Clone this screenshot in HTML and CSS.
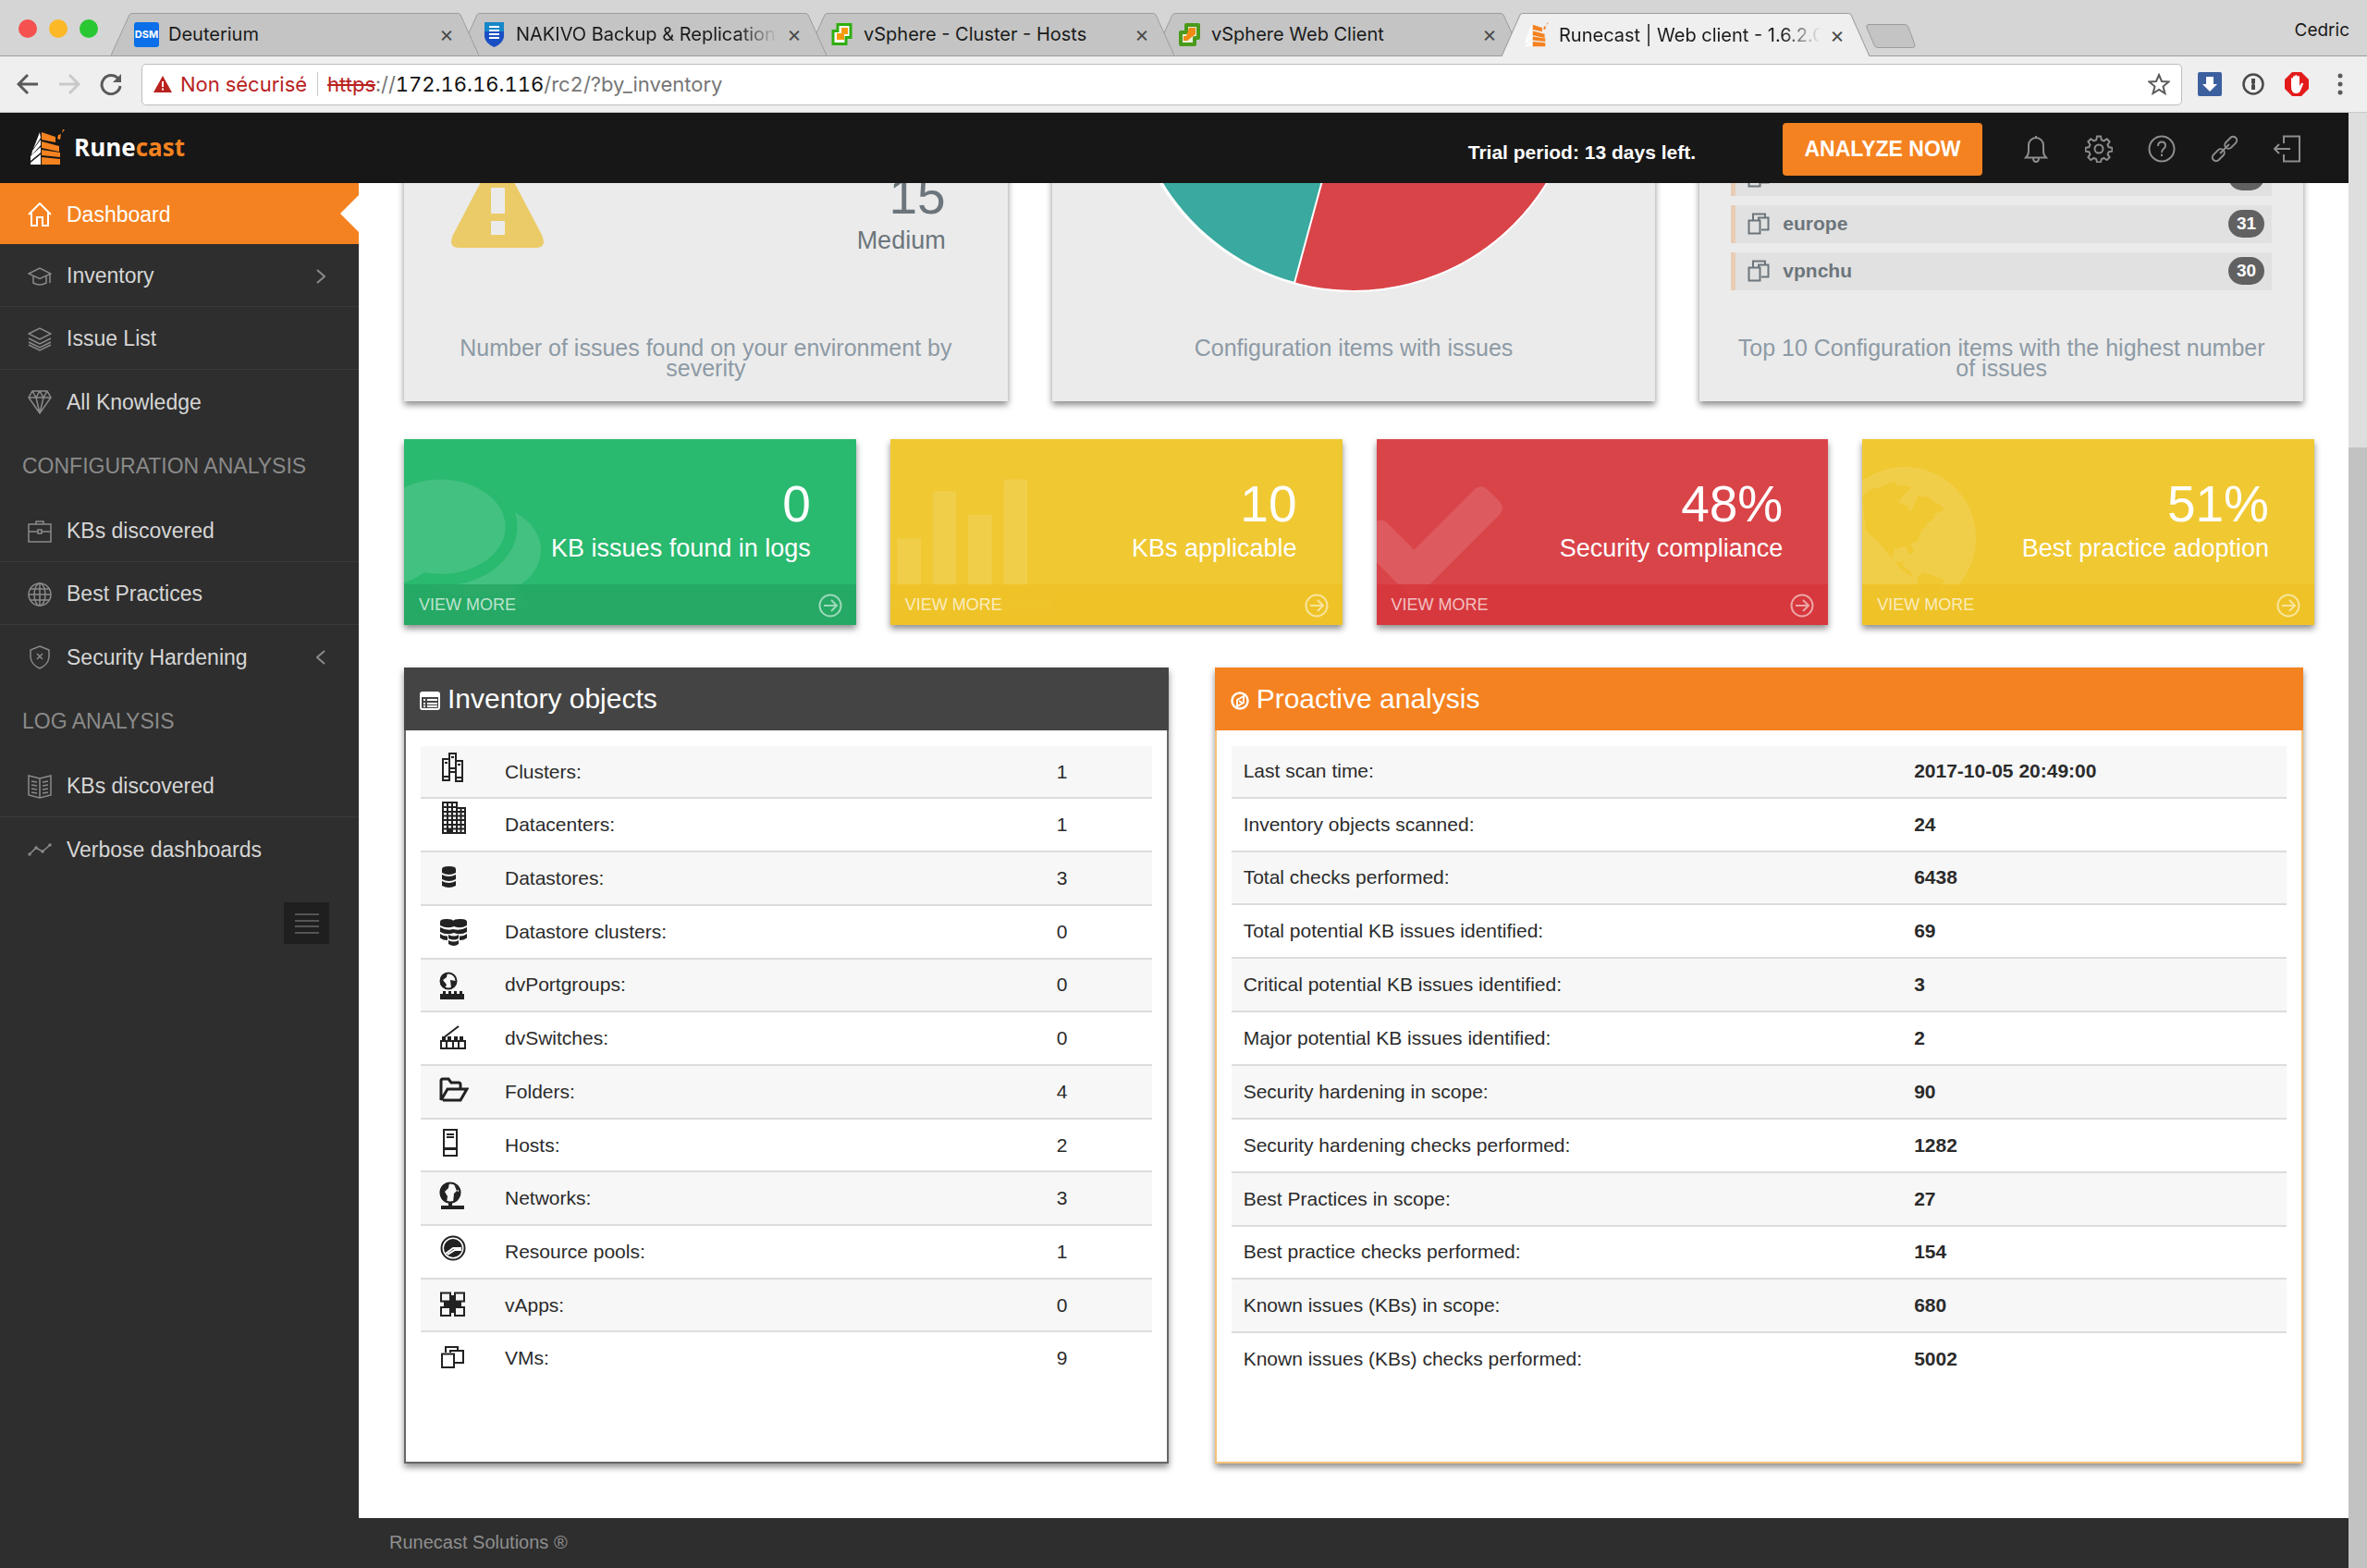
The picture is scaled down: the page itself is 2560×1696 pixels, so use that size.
FILE: index.html
```html
<!DOCTYPE html>
<html lang="en">
<head>
  <meta charset="UTF-8">
  <title>Runecast | Web client - 1.6.2.0</title>
  <link rel="stylesheet" href="styles.css">
</head>
<body>

  <!-- shared shapes -->
  <svg class="defs" aria-hidden="true">
    <symbol id="tab-shape" viewBox="0 0 398 46" preserveAspectRatio="none">
      <path d="M0 46 L20 2 Q21 .5 23 .5 H375 Q377 .5 378 2 L398 46"/>
    </symbol>
    <symbol id="vm" viewBox="0 0 24 24">
      <path d="M6 8V1.500h13V5M12 8V5.500h10.500v13H15M1.500 8.500h12v14h-12z"/>
    </symbol>
    <symbol id="arrow" viewBox="0 0 26 26">
      <circle cx="13" cy="13" r="11.500"/><path d="M6 13h13M14 7l6 6-6 6"/>
    </symbol>
    <symbol id="logo" viewBox="0 0 40 40">
      <path class="logo-side" d="M11 4L12 10 4 22zM12 12v6L2 29l1-5zM12 20v6L1 35v-5zM12 28v11H1v-2z"/>
      <path class="logo-front" d="M13 4l15 5v6l-15-3zM13 14l19 5v6l-19-4zM13 23l20 3v5l-20-2zM13 31l20 2v6H13zM31 7l3-1-1 6-3-1zM36 1l2 0-3 4z"/>
    </symbol>
  </svg>

  <!-- browser window -->
  <div class="tabstrip">
    <div class="lights"><span class="red"></span><span class="amber"></span><span class="green"></span></div>
    <div class="tabs">
      <div class="tab">
        <svg class="tab-bg"><use href="#tab-shape"/></svg>
        <span class="dsm">DSM</span>
        <span class="tab-title">Deuterium</span>
        <button class="close" aria-label="Close tab">×</button>
      </div>
      <div class="tab">
        <svg class="tab-bg"><use href="#tab-shape"/></svg>
        <svg class="favicon" viewBox="0 0 27 27"><path fill="#1687c9" d="M3 0h21v12H3z"/><path fill="#1a4fc4" d="M3 10h21v6q-1 7-10.500 11Q4 23 3 16z"/><path stroke="#fff" stroke-width="2" d="M8 5h11M8 9h11M8 13h11M8 17h11"/></svg>
        <span class="tab-title faded">NAKIVO Backup &amp; Replication v</span>
        <button class="close" aria-label="Close tab">×</button>
      </div>
      <div class="tab">
        <svg class="tab-bg"><use href="#tab-shape"/></svg>
        <svg class="favicon" viewBox="0 0 27 27"><path fill="#fff" stroke="#2fae10" stroke-width="3" d="M9 2.500h14v14h-5v7H4v-14h5z"/><path fill="#f59a0c" d="M13 6h7v7h-4v6H8v-7h5z"/></svg>
        <span class="tab-title">vSphere - Cluster - Hosts</span>
        <button class="close" aria-label="Close tab">×</button>
      </div>
      <div class="tab">
        <svg class="tab-bg"><use href="#tab-shape"/></svg>
        <svg class="favicon" viewBox="0 0 27 27"><path fill="#e9efd8" stroke="#4a9a1c" stroke-width="4" stroke-linejoin="round" d="M10 3h13v14h-4v7H4V11h6z"/><path fill="#ef8a12" d="M13 6h7v7l-9 7H7v-5h3z"/></svg>
        <span class="tab-title">vSphere Web Client</span>
        <button class="close" aria-label="Close tab">×</button>
      </div>
      <div class="tab active">
        <svg class="tab-bg"><use href="#tab-shape"/></svg>
        <svg class="favicon dark-side"><use href="#logo"/></svg>
        <span class="tab-title faded">Runecast | Web client - 1.6.2.0</span>
        <button class="close" aria-label="Close tab">×</button>
      </div>
      <svg class="newtab" viewBox="0 0 54 26"><path d="M3 .5h39q3 0 4 3l7 19q0 3-2 3H13q-3 0-4-3L1 4Q0 .5 3 .5z"/></svg>
    </div>
    <span class="profile">Cedric</span>
  </div>

  <div class="toolbar">
    <button class="tool" aria-label="Back"><svg viewBox="0 0 24 24"><path d="M23 12H2M12 2L2 12l10 10"/></svg></button>
    <button class="tool off" aria-label="Forward"><svg viewBox="0 0 24 24"><path d="M1 12h21M12 2l10 10-10 10"/></svg></button>
    <button class="tool" aria-label="Reload"><svg viewBox="0 0 24 24"><path d="M20 6.500A10 10 0 1 0 22 14"/><path fill="#5a5a5a" stroke="none" d="M23 1v9h-9z"/></svg></button>
    <div class="omnibox">
      <svg class="warn" viewBox="0 0 20 18"><path fill="#b9221f" d="M10 0l10 18H0z"/><path stroke="#fff" stroke-width="2" d="M10 6v6M10 13.500v2"/></svg>
      <span class="insecure">Non sécurisé</span>
      <label class="url" for="address"><s>https</s>://<b>172.16.16.116</b></label>
      <input id="address" type="text" value="/rc2/?by_inventory">
      <svg class="star" viewBox="0 0 24 24"><path d="M12 2l3 7 7.500.5-6 5 2 7.500-6.500-4-6.500 4 2-7.500-6-5L9 9z"/></svg>
    </div>
    <div class="extensions">
      <svg viewBox="0 0 26 26"><rect width="26" height="26" rx="2" fill="#3c5f9e"/><path fill="#fff" d="M9 5h8v8h4l-8 8-8-8h4z"/></svg>
      <svg viewBox="0 0 26 26"><circle cx="13" cy="13" r="10.500" fill="none" stroke="#4a4a4a" stroke-width="2.500"/><path fill="#4a4a4a" d="M11 7h4v5l-1 1 1 1v5h-4v-5l1-1-1-1z"/></svg>
      <svg viewBox="0 0 26 26"><path fill="#e31b1b" d="M8 0h10l8 8v10l-8 8H8l-8-8V8z"/><path fill="#fff" d="M7 15V7q1-2 2 0v5V5q1-2 2 0v6V4q1.500-2 2.500 0v7V5q1.500-2 2.500 0v10l2-3q2-1 2 1l-3 7q-1 3-5 3-5 0-5-8z"/></svg>
      <svg class="dots" viewBox="0 0 26 26"><circle cx="13" cy="4" r="2.500"/><circle cx="13" cy="13" r="2.500"/><circle cx="13" cy="22" r="2.500"/></svg>
    </div>
  </div>

  <div class="viewport">
    <div class="page">

      <header class="header">
        <a class="brand" href="#"><svg><use href="#logo"/></svg><span>Rune<em>cast</em></span></a>
        <div class="header-right">
          <strong class="trial">Trial period: 13 days left.</strong>
          <button class="analyze">ANALYZE NOW</button>
          <nav class="header-icons">
            <a href="#" aria-label="Notifications"><svg viewBox="0 0 30 30"><path d="M4 24.500q3-3 3-7V11a8 8 0 0 1 16 0v6.500q0 4 3 7zM12 25q0 4 3 4t3-4M15 3V1"/></svg></a>
            <a href="#" aria-label="Settings"><svg viewBox="0 0 30 30"><circle cx="15" cy="15" r="4.500"/><path d="M13 1.500h4l.8 3.800 2.600 1.100 3.300-2.100 2.900 2.900-2.100 3.300 1.100 2.600 3.900.8v3.600l-3.900.8-1.100 2.600 2.100 3.300-2.900 2.900-3.300-2.100-2.600 1.100-.8 3.400h-4l-.8-3.400-2.600-1.100-3.300 2.100-2.900-2.900 2.100-3.300-1.100-2.600-3.900-.8v-3.600l3.900-.8 1.100-2.600-2.100-3.300 2.900-2.900 3.300 2.100 2.600-1.100z"/></svg></a>
            <a href="#" aria-label="Help"><svg viewBox="0 0 30 30"><circle cx="15" cy="15" r="13.500"/><path d="M11 12q0-4.500 4-4.500t4 4q0 2-2 3.500t-2 4M15 20.500v2.500"/></svg></a>
            <a href="#" aria-label="Link"><svg viewBox="0 0 30 30"><g transform="rotate(45 15 15)"><rect x="11" y="-2" width="8" height="15" rx="4"/><rect x="11" y="17" width="8" height="15" rx="4"/><path d="M15 8v14"/></g></svg></a>
            <a href="#" aria-label="Log out"><svg viewBox="0 0 30 30"><path d="M11 9V1.500h17v27H11V21M1 15h17M6 10l-5 5 5 5"/></svg></a>
          </nav>
        </div>
      </header>

      <div class="columns">
        <aside class="sidebar">
          <nav class="menu">
            <a class="active" href="#"><svg viewBox="0 0 26 26"><path d="M1 13L13 1l12 12M4 11v14h6v-9h6v9h6V11"/></svg>Dashboard</a>
            <a href="#"><svg viewBox="0 0 26 26"><path d="M1 10l12-6 12 6-12 5.500zM6 13v7q7 4 14 0v-7M24 11v9"/></svg>Inventory<svg class="chevron" viewBox="0 0 10 16"><path d="M1 1l8 7-8 7"/></svg></a>
            <a href="#"><svg viewBox="0 0 26 26"><path d="M1 7l12-6 12 6-12 6zM1 12l12 6 12-6M1 16l12 6 12-6M1 19l12 6 12-6"/></svg>Issue List</a>
            <a href="#"><svg viewBox="0 0 26 26"><path d="M5 1h16l4 7-12 17L1 8zM1 8h24M9 8l4 17 4-17M5 1l4 7 4-7 4 7 4-7"/></svg>All Knowledge</a>
          </nav>
          <h3 class="menu-title">CONFIGURATION ANALYSIS</h3>
          <nav class="menu">
            <a href="#"><svg viewBox="0 0 26 26"><path d="M1 5h24v19H1zM9 5V2h8v3M1 13h10M15 13h10M11 11h4v4h-4z"/></svg>KBs discovered</a>
            <a href="#"><svg viewBox="0 0 26 26"><circle cx="13" cy="13" r="12"/><ellipse cx="13" cy="13" rx="6" ry="12"/><path d="M13 1v24M1 13h24M3 7h20M3 19h20"/></svg>Best Practices</a>
            <a href="#"><svg viewBox="0 0 26 26"><path d="M13 1l10 4v8q-1 8-10 12Q4 21 3 13V5zM10 9l6 6M16 9l-6 6"/></svg>Security Hardening<svg class="chevron" viewBox="0 0 10 16"><path d="M9 1L1 8l8 7"/></svg></a>
          </nav>
          <h3 class="menu-title">LOG ANALYSIS</h3>
          <nav class="menu">
            <a href="#"><svg viewBox="0 0 26 26"><path d="M1 1l12 3 12-3v21l-12 3-12-3zM13 4v21M4 7l6 1M4 11l6 1M4 15l6 1M4 19l6 1M22 7l-6 1M22 11l-6 1M22 15l-6 1M22 19l-6 1"/></svg>KBs discovered</a>
            <a href="#"><svg viewBox="0 0 26 26"><path d="M2 18l7-7 7 4 8-7" /><g fill="#8a8a8a"><circle cx="2" cy="18" r="1"/><circle cx="9" cy="11" r="1"/><circle cx="16" cy="15" r="1"/><circle cx="24" cy="8" r="1"/></g></svg>Verbose dashboards</a>
          </nav>
          <button class="collapse" aria-label="Collapse menu"><svg viewBox="0 0 28 24"><path d="M1 2h26M1 9h26M1 15h26M1 22h26"/></svg></button>
        </aside>

        <div class="content">
          <main>

            <div class="cards">
              <section class="card">
                <div class="severity">
                  <svg viewBox="0 0 100 96"><path fill="#ebcb67" fill-rule="evenodd" d="M43 4q7-8 14 0l41 78q6 14-6 14H8q-12 0-6-14zM43 31v28h15V31zM43 67v15h15V67z"/></svg>
                  <div><div class="number">15</div><div class="label">Medium</div></div>
                </div>
                <p class="caption">Number of issues found on your environment by severity</p>
              </section>

              <section class="card">
                <svg class="pie" viewBox="0 0 492 492">
                  <circle cx="246" cy="246" r="245" fill="#d94449" stroke="#fff" stroke-width="2"/>
                  <path fill="#3aa99f" stroke="#fff" stroke-width="2" d="M246 246L182 482A245 245 0 0 1 246 1z"/>
                </svg>
                <p class="caption">Configuration items with issues</p>
              </section>

              <section class="card">
                <ul class="top-list">
                  <li><svg><use href="#vm"/></svg>debian1<span class="badge">31</span></li>
                  <li><svg><use href="#vm"/></svg>europe<span class="badge">31</span></li>
                  <li><svg><use href="#vm"/></svg>vpnchu<span class="badge">30</span></li>
                </ul>
                <p class="caption">Top 10 Configuration items with the highest number of issues</p>
              </section>
            </div>

            <div class="tiles">
              <section class="tile green">
                <svg class="mark" viewBox="0 0 1792 1792"><path d="M1408 768q0 139-94 257t-256.500 186.500-353.500 68.500q-86 0-176-16-124 88-278 128-36 9-86 16h-3q-11 0-20.500-8t-11.500-21q-1-3-1-6.500t.5-6.500 2-6l2.500-5t3.500-5.500 4-5 4.500-5 4-4.500q5-6 23-25t26-29.500 22.500-29 25-38.500 20.500-44q-124-72-195-177t-71-224q0-139 94-257t256.500-186.500 353.500-68.500 353.500 68.500 256.500 186.500 94 257zm384 256q0 120-71 224.500t-195 176.500q10 24 20.500 44t25 38.500 22.500 29 26 29.500 23 25q1 1 4 4.500t4.500 5 4 5 3.500 5.500l2.500 5t2 6 .5 6.500-1 6.500q-3 14-13 22t-22 7q-50-7-86-16-154-40-278-128-90 16-176 16-271 0-472-132 58 4 88 4 161 0 309-45t264-129q125-92 192-212t67-257q0-77-23-152 129 71 204 178t75 230z"/></svg>
                <div class="figures"><div class="number">0</div><div class="label">KB issues found in logs</div></div>
                <a class="more" href="#">VIEW MORE<svg><use href="#arrow"/></svg></a>
              </section>
              <section class="tile yellow">
                <svg class="mark" viewBox="0 0 1792 1792"><path d="M640 896v512h-256v-512h256zm384-512v1024h-256v-1024h256zm1024 1152v128h-2048v-1536h128v1408h1920zm-640-896v768h-256v-768h256zm384-384v1152h-256v-1152h256z"/></svg>
                <div class="figures"><div class="number">10</div><div class="label">KBs applicable</div></div>
                <a class="more" href="#">VIEW MORE<svg><use href="#arrow"/></svg></a>
              </section>
              <section class="tile red">
                <svg class="mark" viewBox="0 0 1792 1792"><path d="M1671 566q0 40-28 68l-724 724-136 136q-28 28-68 28t-68-28l-136-136-362-362q-28-28-28-68t28-68l136-136q28-28 68-28t68 28l294 295 656-657q28-28 68-28t68 28l136 136q28 28 28 68z"/></svg>
                <div class="figures"><div class="number">48%</div><div class="label">Security compliance</div></div>
                <a class="more" href="#">VIEW MORE<svg><use href="#arrow"/></svg></a>
              </section>
              <section class="tile yellow">
                <svg class="mark globe" viewBox="0 0 179 179"><path fill-rule="evenodd" d="M89 12a77 77 0 1 0 .1 0zM43 44l7-7 12-3 16-6 3 5 4-2 12 3-6 5-9 11 11 5 2 6 4-7 5-11 11 2 5 5 6 2 6 6-12 6 2 3-7 5-10 12-1 8-9 3 4 9-4 3-6-9-12 3-2 12 10 3 3-5-1 9 8 5 3 7-12-8-12-15-15-17-12-11zM103 130l7-4 22 8-5 11-17 7-7-8z"/></svg>
                <div class="figures"><div class="number">51%</div><div class="label">Best practice adoption</div></div>
                <a class="more" href="#">VIEW MORE<svg><use href="#arrow"/></svg></a>
              </section>
            </div>

            <div class="panels">
              <section class="panel inventory">
                <h2><svg viewBox="0 0 22 20"><rect x="1" y="1" width="20" height="18" rx="2" fill="none" stroke="#fff" stroke-width="2"/><path fill="#fff" d="M1 1h20v5H1zM4 8h2v2H4zM4 12h2v2H4zM4 15h2v2H4zM8 8h11v2H8zM8 12h11v2H8zM8 15h11v2H8z"/></svg>Inventory objects</h2>
                <table>
                  <tr><td class="ico"><svg viewBox="0 0 32 44"><path d="M4 14h7v23H4zM11 8h7v20h-7zM18 16h7v22h-7zM4 33h7M18 34h7M11 24h7"/><path d="M6 18h3M13 12h3M20 20h3"/></svg></td><td>Clusters:</td><td>1</td></tr>
                  <tr><td class="ico"><svg viewBox="0 0 32 44"><path d="M4 4h15v33H4zM19 10h9v27h-9M9 4v33M14 4v33M23.500 10v27M4 9h15M4 14h24M4 18.500h24M4 23h24M4 28h24M4 32.500h24"/><path class="solid" d="M9 32h6v5H9z"/></svg></td><td>Datacenters:</td><td>1</td></tr>
                  <tr><td class="ico"><svg viewBox="0 0 32 44"><path class="solid" d="M3 18q0-3 7.500-3t7.500 3v4q-7.500 4-15 0zM3 24q7.500 4 15 0v5q-7.500 4-15 0zM3 31q7.500 4 15 0v5q-7.500 4-15 0z"/></svg></td><td>Datastores:</td><td>3</td></tr>
                  <tr><td class="ico"><svg viewBox="0 0 32 44"><path class="solid" d="M1 17q0-3 7-3t7 2q1-2 8-2t7 3v4q-7 4-14 1-7 3-15-1zM1 23q7 4 14 2 8 2 15-2v5q-7 4-14 1-8 3-15-1zM1 30q4 3 8 2.500V37q-5 0-8-2.500zM30 30q-4 3-8 2.500V37q5 0 8-2.500zM10 31q6 3 11 0v4q-5 3-11 0zM10 37q6 3 11 0v4q-5 4-11 0z"/></svg></td><td>Datastore clusters:</td><td>0</td></tr>
                  <tr><td class="ico"><svg viewBox="0 0 32 44"><circle cx="10" cy="23" r="8.500"/><path class="solid" d="M9 14q-8 1-8 9 0 6 5 8l2-4-4-5 4-3zM12 22l6 1q0 5-5 8zM1 37h3v-3h3v3h3v-3h3v3h3v-3h3v3h3v-3h3v3h2v6H1z"/></svg></td><td>dvPortgroups:</td><td>0</td></tr>
                  <tr><td class="ico"><svg viewBox="0 0 32 44"><path d="M2 31h26v8H2zM8 31v8M15 31v8M21 31v8M5 27v3M11 27v3M18 27v3M24 27v3M4 28l17-13"/><path class="solid" d="M3 26h4v4H3zM9 26h4v4H9zM16 26h4v4h-4zM22 26h4v4h-4z"/></svg></td><td>dvSwitches:</td><td>0</td></tr>
                  <tr><td class="ico"><svg class="bold" viewBox="0 0 32 44"><path d="M2 37V16q0-2 2-2h6l3 4h8q2 0 2 2v4M2 37l7-12h21l-7 12H4"/></svg></td><td>Folders:</td><td>4</td></tr>
                  <tr><td class="ico"><svg viewBox="0 0 32 44"><path d="M5 11h14v28H5zM8 16h8M8 19h8"/><path class="solid" d="M5 30h14v3H5z"/></svg></td><td>Hosts:</td><td>2</td></tr>
                  <tr><td class="ico"><svg viewBox="0 0 32 44"><circle cx="12" cy="22" r="10.500"/><path class="solid" d="M11 11Q1 12 1 22q0 8 7 11l1-7-3-5 4-4zM16 13l6 5-3 2zM16 23l3-3 4 2q-1 8-8 11zM10 32h4v4h13v4H2v-4h8z"/></svg></td><td>Networks:</td><td>3</td></tr>
                  <tr><td class="ico"><svg viewBox="0 0 32 44"><circle cx="15" cy="24" r="12.500"/><circle class="solid" cx="15" cy="24" r="10"/><path class="light" d="M7 30l8-6h9M9 31l8-5h7"/></svg></td><td>Resource pools:</td><td>1</td></tr>
                  <tr><td class="ico"><svg viewBox="0 0 32 44"><path d="M2 14.500h10v9H2zM17 14.500h10v9H17zM2 30h10v9H2zM17 30h10v9H17z"/><path class="solid" d="M12 17h5v6h7v7h-7v6h-5v-6H5v-7h7z"/></svg></td><td>vApps:</td><td>0</td></tr>
                  <tr><td class="ico"><svg viewBox="0 0 32 44"><path d="M7 22v-6h13v4M12 22v-2h14v13h-9M3 23.500h13V38H3z"/></svg></td><td>VMs:</td><td>9</td></tr>
                </table>
              </section>

              <section class="panel proactive">
                <h2><svg viewBox="0 0 20 20"><circle cx="10" cy="10" r="8.500" fill="none" stroke="#fff" stroke-width="2.500"/><path fill="none" stroke="#fff" stroke-width="2" d="M14 5l-7 4v7l7-4zM9 10l3 2"/></svg>Proactive analysis</h2>
                <table>
                  <tr><td>Last scan time:</td><th>2017-10-05 20:49:00</th></tr>
                  <tr><td>Inventory objects scanned:</td><th>24</th></tr>
                  <tr><td>Total checks performed:</td><th>6438</th></tr>
                  <tr><td>Total potential KB issues identified:</td><th>69</th></tr>
                  <tr><td>Critical potential KB issues identified:</td><th>3</th></tr>
                  <tr><td>Major potential KB issues identified:</td><th>2</th></tr>
                  <tr><td>Security hardening in scope:</td><th>90</th></tr>
                  <tr><td>Security hardening checks performed:</td><th>1282</th></tr>
                  <tr><td>Best Practices in scope:</td><th>27</th></tr>
                  <tr><td>Best practice checks performed:</td><th>154</th></tr>
                  <tr><td>Known issues (KBs) in scope:</td><th>680</th></tr>
                  <tr><td>Known issues (KBs) checks performed:</td><th>5002</th></tr>
                </table>
              </section>
            </div>

          </main>
          <footer>Runecast Solutions ®</footer>
        </div>
      </div>
    </div>
    <div class="scrollbar"><div class="thumb"></div></div>
  </div>

</body>
</html>
```
FILE: styles.css
```css
* {
  box-sizing: border-box;
}

body {
  margin: 0;
  height: 100vh;
  display: flex;
  flex-direction: column;
  overflow: hidden;
  background: #fff;
  color: #2b2b2b;
  font-family: "Liberation Sans", Arial, sans-serif;
  font-size: 21px;
}

a {
  color: inherit;
  text-decoration: none;
}

button {
  border: none;
  padding: 0;
  background: none;
  font-family: inherit;
}

svg {
  display: block;
  flex: none;
}

.defs {
  position: absolute;
  width: 0;
  height: 0;
}

/* browser tabs */
.tabstrip {
  height: 61px;
  flex: none;
  display: flex;
  align-items: flex-end;
  background: #d5d5d5;
  border-bottom: 1px solid #9c9c9c;
  font-family: Inter, Roboto, sans-serif;
  color: #1a1a1a;
}

.lights {
  display: flex;
  gap: 13px;
  padding-left: 20px;
  width: 120px;
  height: 39px;
}

.lights span {
  width: 20px;
  height: 20px;
  border-radius: 50%;
}

.lights .red { background: #f5514f; }
.lights .amber { background: #fcb827; }
.lights .green { background: #29c833; }

.tabs {
  flex: 1;
  display: flex;
}

.tab {
  position: relative;
  width: 398px;
  height: 46px;
  margin-right: -22px;
  padding: 0 29px 0 25px;
  display: flex;
  align-items: center;
  gap: 10px;
}

.tab:nth-child(1) { z-index: 4; }
.tab:nth-child(2) { z-index: 3; }
.tab:nth-child(3) { z-index: 2; }
.tab:nth-child(4) { z-index: 1; }

.tab.active {
  z-index: 5;
  margin-bottom: -1px;
  height: 47px;
}

.tab-bg {
  position: absolute;
  left: 0;
  top: 0;
  width: 100%;
  height: 100%;
  z-index: -1;
  fill: #c4c4c4;
  stroke: #9c9c9c;
}

.active .tab-bg {
  fill: #efefef;
}

.favicon {
  width: 27px;
  height: 27px;
}

.dsm {
  width: 27px;
  height: 27px;
  border-radius: 3px;
  background: #0a6fe8;
  color: #fff;
  font-size: 11px;
  font-weight: bold;
  line-height: 27px;
  text-align: center;
}

.tab-title {
  flex: 1;
  overflow: hidden;
  white-space: nowrap;
  font-size: 20px;
}

.faded {
  mask-image: linear-gradient(to right, #000 85%, transparent);
}

.close {
  width: 14px;
  color: #4a4a4a;
  font-size: 24px;
  line-height: 24px;
}

.newtab {
  width: 54px;
  height: 26px;
  margin: 12px 0 0 18px;
  fill: #c4c4c4;
  stroke: #9c9c9c;
}

.profile {
  padding-right: 19px;
  height: 39px;
  font-size: 19px;
}

/* browser toolbar */
.toolbar {
  height: 61px;
  flex: none;
  display: flex;
  align-items: center;
  background: #efefef;
  border-bottom: 1px solid #c9c9c9;
  font-family: Inter, Roboto, sans-serif;
  font-variant-numeric: tabular-nums;
  padding: 0 16px 0 18px;
}

.tool {
  width: 24px;
  margin-right: 21px;
}

.tool svg {
  width: 24px;
  height: 24px;
  fill: none;
  stroke: #5a5a5a;
  stroke-width: 3;
}

.tool.off svg {
  stroke: #c9c9c9;
}

.omnibox {
  flex: 1;
  height: 45px;
  display: flex;
  align-items: center;
  padding: 0 12px;
  background: #fff;
  border: 1px solid #bdbdbd;
  border-radius: 5px;
  font-size: 22px;
}

.warn {
  width: 20px;
  height: 18px;
  margin-right: 9px;
}

.insecure {
  color: #b9221f;
  padding-right: 11px;
  border-right: 1px solid #c9c9c9;
  margin-right: 10px;
  line-height: 26px;
}

.url {
  color: #767676;
}

.url s {
  color: #b9221f;
}

.url b {
  color: #111;
  font-weight: normal;
}

.omnibox input {
  flex: 1;
  border: none;
  padding: 0;
  outline: none;
  color: #767676;
  font: inherit;
}

.star {
  width: 24px;
  height: 24px;
  fill: none;
  stroke: #5a5a5a;
  stroke-width: 2;
}

.extensions {
  display: flex;
  gap: 21px;
  padding-left: 17px;
}

.extensions svg {
  width: 26px;
  height: 26px;
}

.extensions .dots {
  fill: #5a5a5a;
}

/* page frame */
.viewport {
  flex: 1;
  min-height: 0;
  display: flex;
}

.page {
  flex: 1;
  display: flex;
  flex-direction: column;
}

.scrollbar {
  width: 20px;
  display: flex;
  flex-direction: column;
  justify-content: flex-end;
  background: #dedede;
}

.thumb {
  height: 77%;
  background: #c2c2c2;
}

.header {
  height: 76px;
  flex: none;
  display: flex;
  justify-content: space-between;
  align-items: center;
  padding: 2px 51px 0 32px;
  background: #171717;
  color: #fff;
}

.brand {
  display: flex;
  align-items: center;
  gap: 8px;
  padding-bottom: 4px;
  font-family: "Open Sans", sans-serif;
  font-size: 26px;
  font-weight: 700;
}

.brand svg {
  width: 40px;
  height: 40px;
}

.brand em {
  font-style: normal;
  color: #f58220;
}

.logo-side { fill: #fff; }
.dark-side .logo-side { fill: #777; }
.logo-front { fill: #f58220; }

.header-right {
  display: flex;
  align-items: center;
}

.trial {
  padding: 8px 94px 0 0;
}

.analyze {
  width: 216px;
  height: 57px;
  margin-right: 43px;
  border-radius: 4px;
  background: #f58220;
  color: #fff;
  font-size: 23px;
  font-weight: bold;
}

.header-icons {
  display: flex;
  gap: 38px;
}

.header-icons svg {
  width: 30px;
  height: 30px;
  fill: none;
  stroke: #8d8d8d;
  stroke-width: 2;
}

.columns {
  flex: 1;
  min-height: 0;
  display: flex;
}

/* left menu */
.sidebar {
  width: 388px;
  flex: none;
  background: #2e2e2e;
  color: #d6d6d6;
}

.menu a {
  position: relative;
  height: 68px;
  display: flex;
  align-items: center;
  gap: 16px;
  padding: 2px 36px 0 30px;
  border-bottom: 1px solid #3a3a3a;
  font-size: 23px;
}

.menu a:last-child {
  border-bottom: none;
}

.menu a.active {
  height: 66px;
  border-bottom: none;
  background: #f58220;
  color: #fff;
}

/* notch that points at the open page */
.menu a.active::after {
  content: "";
  position: absolute;
  right: 0;
  top: 13px;
  border: 20px solid transparent;
  border-left: none;
  border-right-color: #fff;
}

.menu svg {
  width: 26px;
  height: 26px;
  fill: none;
  stroke: #8a8a8a;
  stroke-width: 1.5;
}

.menu .active svg {
  stroke: #fff;
  stroke-width: 2;
}

.menu .chevron {
  width: 10px;
  height: 16px;
  margin-left: auto;
  stroke-width: 2;
}

.menu-title {
  margin: 0;
  padding-left: 24px;
  color: #8a8a8a;
  font-size: 23px;
  font-weight: normal;
  line-height: 72px;
}

.collapse {
  display: block;
  width: 49px;
  height: 45px;
  margin: 24px 32px 0 auto;
  padding: 0 11px;
  background: #1f1f1f;
}

.collapse svg {
  width: 28px;
  height: 24px;
  stroke: #555;
  stroke-width: 2;
}

/* scrolled to the end, so it hangs from the bottom edge */
.content {
  flex: 1;
  overflow: hidden;
  display: flex;
  flex-direction: column;
  justify-content: flex-end;
}

main {
  flex: none;
  padding: 0 49px 59px;
}

footer {
  flex: none;
  padding: 0 0 2px 33px;
  background: #2e2e2e;
  color: #8f8f8f;
  font-size: 20px;
  line-height: 52px;
}

.card, .tile, .panel {
  box-shadow: 0 4px 7px rgba(0, 0, 0, 0.45);
}

.number {
  font-size: 55px;
  line-height: 60px;
}

.label {
  margin-top: 4px;
  font-size: 27px;
  line-height: 28px;
}

.cards {
  display: grid;
  grid-template-columns: repeat(3, 1fr);
  gap: 48px;
}

.card {
  height: 650px;
  display: flex;
  flex-direction: column;
  justify-content: flex-end;
  padding: 0 34px 25px;
  background: #ebebeb;
  color: #6c757b;
}

.severity {
  display: flex;
  justify-content: space-between;
  align-items: flex-end;
  padding: 0 33px 91px 17px;
  text-align: right;
}

.severity svg {
  width: 100px;
  height: 96px;
  margin-bottom: 6px;
}

.pie {
  width: 492px;
  height: 492px;
  margin: 0 auto 49px;
}

.top-list {
  list-style: none;
  margin: 0 0 51px;
  padding: 0;
  display: flex;
  flex-direction: column;
  gap: 10px;
}

.top-list li {
  height: 41px;
  display: flex;
  align-items: center;
  gap: 14px;
  padding: 0 8px 1px 13px;
  border-left: 5px solid #e8ccb4;
  background: #e1e1e1;
  font-weight: bold;
}

.top-list svg {
  width: 24px;
  height: 24px;
  fill: none;
  stroke: #6c757b;
  stroke-width: 2;
}

.badge {
  margin-left: auto;
  width: 39px;
  border-radius: 15px;
  background: #616161;
  color: #fff;
  font-size: 19px;
  line-height: 30px;
  text-align: center;
}

.caption {
  margin: 0;
  min-height: 44px;
  color: #8d9aa5;
  font-size: 25px;
  line-height: 22px;
  text-align: center;
}

/* coloured tiles */
.tiles {
  display: grid;
  grid-template-columns: repeat(4, 1fr);
  gap: 37px;
  margin: 41px -12px 46px 0;
}

.tile {
  position: relative;
  height: 201px;
  overflow: hidden;
  display: flex;
  flex-direction: column;
  justify-content: space-between;
  color: #fff;
  text-align: right;
}

.tile.green { background: #29b96f; }
.tile.yellow { background: #f0c832; }
.tile.red { background: #d94449; }
.green .more { background: rgba(37, 166, 99, 0.85); }
.yellow .more { background: rgba(239, 194, 38, 0.85); }
.red .more { background: rgba(214, 54, 59, 0.85); }

.mark {
  position: absolute;
  left: -31px;
  top: 18px;
  width: 179px;
  height: 179px;
  overflow: visible;
  fill: rgba(255, 255, 255, 0.12);
}

.mark.globe {
  left: -43px;
}

.figures {
  padding: 40px 49px 0 0;
}

.more {
  position: relative;
  height: 44px;
  display: flex;
  justify-content: space-between;
  align-items: center;
  padding: 0 15px 0 16px;
  color: rgba(255, 255, 255, 0.7);
  font-size: 18px;
}

.more svg {
  width: 26px;
  height: 26px;
  margin-top: 2px;
  fill: none;
  stroke: rgba(255, 255, 255, 0.55);
  stroke-width: 2;
}

/* panels */
.panels {
  display: grid;
  grid-template-columns: repeat(12, 1fr);
  gap: 50px;
}

.panel {
  padding-bottom: 84px;
  background: #fff;
  border: 2px solid #666;
  border-top: none;
}

.inventory {
  grid-column: span 5;
}

.proactive {
  grid-column: span 7;
  border-color: #f5c27a;
}

.panel h2 {
  display: flex;
  align-items: center;
  gap: 8px;
  height: 68px;
  margin: 0 -2px 17px;
  padding: 0 17px;
  background: #444;
  color: #fff;
  font-size: 30px;
  font-weight: normal;
}

.proactive h2 {
  background: #f58220;
}

.panel h2 svg {
  width: 22px;
  height: 20px;
  margin-top: 3px;
}

.panel.proactive h2 svg {
  width: 20px;
}

table {
  width: calc(100% - 32px);
  height: 690px;
  margin: 0 16px;
  border-collapse: collapse;
  table-layout: fixed;
}

tr {
  border-bottom: 2px solid #dcdcdc;
}

tr:last-child {
  border-bottom: none;
}

tr:nth-child(odd) {
  background: #f7f7f7;
}

td, th {
  padding: 0 13px;
  text-align: left;
}

th {
  width: 36%;
  padding: 0;
  padding-left: 8px;
}

.inventory td {
  padding: 0;
}

.inventory .ico {
  width: 91px;
  padding-left: 20px;
  vertical-align: top;
}

.inventory td:last-child {
  width: 103px;
}

.ico svg {
  width: 32px;
  height: 44px;
  fill: none;
  stroke: #222;
  stroke-width: 2;
}

.ico .bold {
  stroke-width: 3;
}

.ico .solid {
  fill: #222;
  stroke: none;
}

.ico .light {
  stroke: #fff;
}
```
